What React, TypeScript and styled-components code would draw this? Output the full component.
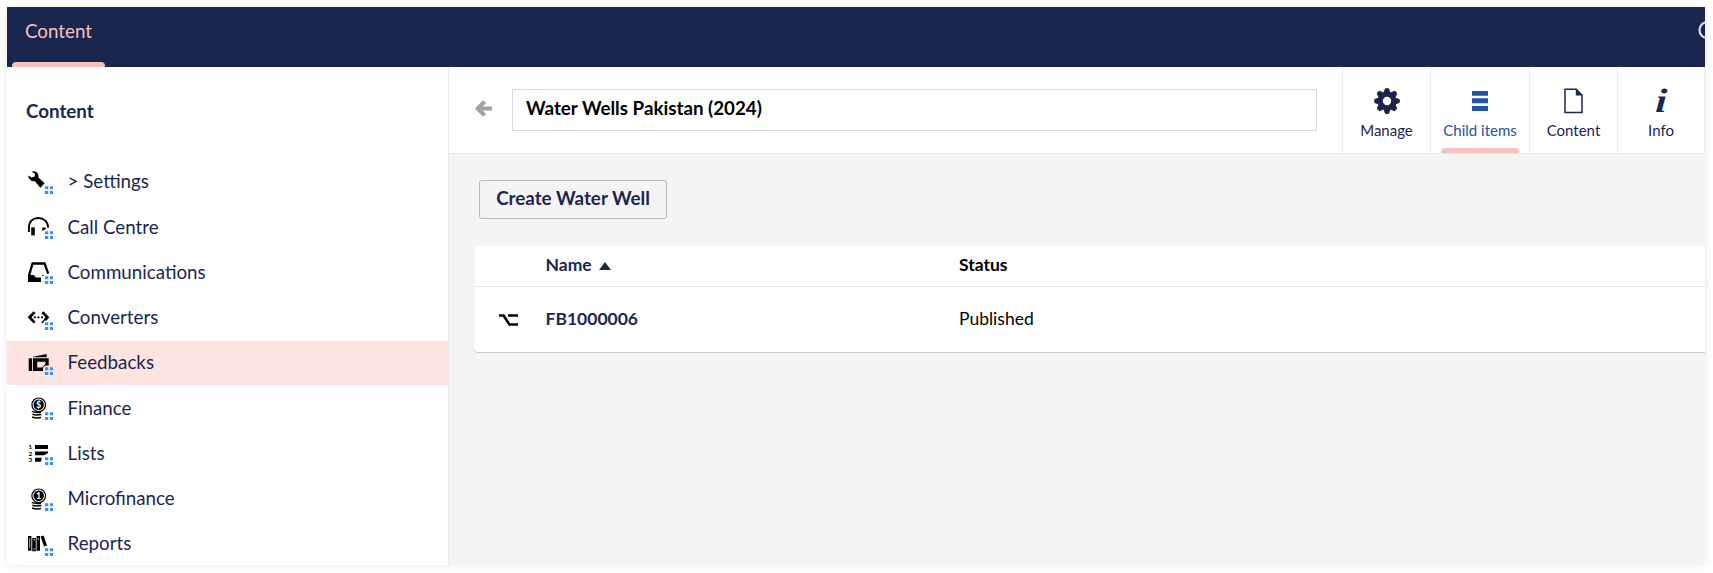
import React from 'react';
import styled, { createGlobalStyle, css } from 'styled-components';

const GlobalStyle = createGlobalStyle`
  *, *::before, *::after { box-sizing: border-box; }
  body { margin: 0; background: #fff; font-family: Lato, "Open Sans", sans-serif; }
`;

const Page = styled.div`
  height: 573px;
  padding: 7px 8px 8px 7px;
  overflow: hidden;
`;
const Frame = styled.div`
  width: 1698px;
  height: 558px;
  display: flex;
  flex-direction: column;
  background: #fff;
  box-shadow: 0 0 9px rgba(0, 0, 0, 0.09);
`;
const TopBar = styled.header`
  height: 60px;
  flex: none;
  display: flex;
  justify-content: space-between;
  padding-left: 5px;
  background: #1b264f;
  overflow: hidden;
`;
const Section = styled.div`
  width: 93px;
  display: flex;
  flex-direction: column;
  justify-content: space-between;
  color: #f5c1bc;
  font-size: 18.75px;
  line-height: 24px;
`;
const SectionLabel = styled.span`
  padding: 12px 0 0 13px;
`;
const Marker = styled.span<{ $width: number }>`
  width: ${(p) => p.$width}px;
  height: 5px;
  border-radius: 4px 4px 0 0;
  background: #f5c1bc;
`;
const Search = styled.svg`
  width: 7px;
  height: 20px;
  margin-top: 13px;
`;
const Body = styled.div`
  flex: 1;
  display: flex;
  min-height: 0;
`;
const Sidebar = styled.nav`
  width: 442px;
  flex: none;
  border-right: 1px solid #e9e9eb;
  overflow: hidden;
`;
const TreeTitle = styled.h2`
  margin: 0;
  height: 93px;
  padding: 32px 0 0 19px;
  color: #1b264f;
  font-size: 18.75px;
  font-weight: 700;
  line-height: 24px;
`;
const Row = styled.div<{ $active?: boolean }>`
  height: 44px;
  margin-bottom: 1.25px;
  padding: 0.3px 0 0 19px;
  display: flex;
  align-items: flex-start;
  color: #1b264f;
  font-size: 18.75px;
  line-height: 42px;
  ${(p) => p.$active && css`background: #fee4e1;`}
`;
const TreeIcon = styled.svg`
  width: 28px;
  height: 26px;
  margin: 7.7px 13.5px 0 0;
`;
const Main = styled.main`
  flex: 1;
  min-width: 0;
  background: #f5f3f4;
`;
const EditorHeader = styled.div`
  height: 87px;
  display: flex;
  align-items: stretch;
  background: #fff;
  border-bottom: 1px solid #e9e9eb;
`;
const Back = styled.svg`
  width: 17px;
  height: 17px;
  margin: 33px 20px 0 26px;
`;
const NameField = styled.input`
  width: 805px;
  height: 42px;
  margin: 22px 25px 0 0;
  padding: 0 13px 5px;
  border: 1px solid #d8d7d9;
  color: #000;
  font: 700 18.75px Lato, sans-serif;
`;
const Tab = styled.div<{ $width: number; $active?: boolean }>`
  width: ${(p) => p.$width}px;
  display: flex;
  flex-direction: column;
  align-items: center;
  justify-content: space-between;
  border-left: 1px solid #e9e9eb;
  color: ${(p) => (p.$active ? '#2152a3' : '#1b264f')};
  font-size: 15px;
  line-height: 20px;
  &:last-child { border-right: 1px solid #e9e9eb; }
`;
const TabInner = styled.div`
  display: flex;
  flex-direction: column;
  align-items: center;
  padding-top: 20px;
`;
const TabIcon = styled.svg`
  width: 28px;
  height: 28px;
  margin-bottom: 5px;
  overflow: visible;
`;
const Content = styled.div`
  padding: 26px 0 0 25px;
`;
const CreateButton = styled.button`
  display: block;
  width: 188px;
  height: 39px;
  margin: 0 0 27px 5px;
  padding: 0 0 5px;
  border: 1px solid #bbb9bc;
  border-radius: 3px;
  background: transparent;
  color: #1b264f;
  font: 700 18.75px Lato, sans-serif;
`;
const Table = styled.div`
  background: #fff;
  border-radius: 4px 0 0 4px;
  box-shadow: 0 1px 1px rgba(0, 0, 0, 0.18);
`;
const TableRow = styled.div<{ $head?: boolean }>`
  height: ${(p) => (p.$head ? 41 : 65)}px;
  padding-bottom: ${(p) => (p.$head ? 4 : 3)}px;
  display: grid;
  grid-template-columns: 71.5px 413.5px 1fr;
  align-items: center;
  font-size: 17.5px;
  border-bottom: ${(p) => (p.$head ? '1px solid #e9e9eb' : '0')};
`;
const Cell = styled.div<{ $bold?: boolean; $navy?: boolean }>`
  display: flex;
  align-items: center;
  gap: 7px;
  font-weight: ${(p) => (p.$bold ? 700 : 400)};
  color: ${(p) => (p.$navy ? '#1b264f' : '#000')};
`;
const SortArrow = styled.svg`
  width: 12px;
  height: 8px;
  margin-top: 4px;
`;
const TypeIcon = styled.svg`
  width: 19px;
  height: 12px;
  margin: 3px 0 0 25px;
`;

const coinStack = (
  <g fill="none" stroke="#000" strokeWidth="1.5">
    <path d="M5.8 17.4q3 1.6 9.3.8M6.4 20.2q3 1.2 9 .4M6 23q4 1.4 9 .6" />
  </g>
);

const coin = (symbol: string) => (
  <>
    <circle cx="12.7" cy="10.8" r="6.8" fill="none" stroke="#000" strokeWidth="1.2" />
    <circle cx="12.7" cy="10.8" r="5.2" />
    <text x="12.7" y="14" textAnchor="middle" fontSize="9" fontWeight="700" fill="#fff">{symbol}</text>
    {coinStack}
  </>
);

const tree: { label: string; active?: boolean; icon: React.ReactNode }[] = [
  {
    label: '> Settings',
    icon: (
      <>
        <path d="M7.6 3.2C10.8 3.2 13 6 12.4 9.4L18.6 15.2L14.4 19.8L8.8 13.2C5.6 13.4 2.4 11.4 2.2 7.4L5.8 9.4L8.6 8.6L9 5.8L5.6 3.8Z" />
      </>
    ),
  },
  {
    label: 'Call Centre',
    icon: (
      <>
        <path d="M2.9 19V14.6C3 8.4 7 5 12.4 5S22 8.8 22.2 14.6" fill="none" stroke="#000" strokeWidth="1.9" />
        <rect x="5.2" y="14.4" width="3.6" height="8" />
        <path d="M16.3 14.4H19.8V16L16.3 18Z" />
      </>
    ),
  },
  {
    label: 'Communications',
    icon: (
      <>
        <path d="M3 17.5L6.6 5.5H18.6L22.2 15.6" fill="none" stroke="#000" strokeWidth="2.3" />
        <path d="M2 17H7.8L9.8 19.4H15V23.9H2Z" />
        <path d="M16.4 17H18.6L16 18.6Z" />
      </>
    ),
  },
  {
    label: 'Converters',
    icon: (
      <>
        <path d="M8.6 8.2L3.6 13.3L8.6 18.6" fill="none" stroke="#000" strokeWidth="2.8" />
        <path d="M16.4 8.2L21.4 13.3L19 16" fill="none" stroke="#000" strokeWidth="2.8" />
        <path d="M19.4 15L15.6 19" stroke="#000" strokeWidth="1.2" />
        <circle cx="8.9" cy="13.3" r="1.1" />
        <circle cx="12.5" cy="13.3" r="1.1" />
        <circle cx="16" cy="13.3" r="1.1" />
      </>
    ),
  },
  {
    label: 'Feedbacks',
    active: true,
    icon: (
      <>
        <rect x="2.7" y="9.3" width="3.4" height="12.7" />
        <path d="M7 7.8L20.7 5V8.2H7Z" />
        <path fillRule="evenodd" d="M7 9.3H22.7V16.6H19.2L17 18.4V22H7ZM11.2 12.8V18.4H16L19.4 15V12.8Z" />
      </>
    ),
  },
  { label: 'Finance', icon: coin('$') },
  {
    label: 'Lists',
    icon: (
      <>
        <path d="M9 6H22V10H9ZM9 12.4H22V14L18 16.2H9ZM9 18.8H15.8L15 22.8H9Z" />
        <g fontSize="6.4" fontWeight="700">
          <text x="2.6" y="10.4">1</text>
          <text x="2.6" y="16.8">2</text>
          <text x="2.6" y="23.2">3</text>
        </g>
      </>
    ),
  },
  { label: 'Microfinance', icon: coin('1') },
  {
    label: 'Reports',
    icon: (
      <>
        <path d="M2 6H5.4V20.8H2ZM6.2 8H9.8V21.2H6.2ZM10.6 6H14V20.8H10.6ZM14.6 6.4L17.6 5.4L21 15.4L18 16.6Z" />
        <path d="M3.7 8V18M7.2 9.8H9M7.2 19H9M12.3 8V10" stroke="#fff" strokeWidth=".7" />
      </>
    ),
  },
];

const gearTeeth = [0, 45, 90, 135, 180, 225, 270, 315];

export default function App() {
  return (
    <Page>
      <GlobalStyle />
      <Frame>
        <TopBar>
          <Section>
            <SectionLabel>Content</SectionLabel>
            <Marker $width={93} />
          </Section>
          <Search viewBox="0 0 7 20">
            <circle cx="9.6" cy="10" r="8.1" fill="none" stroke="#dddee6" strokeWidth="2.2" />
          </Search>
        </TopBar>
        <Body>
          <Sidebar>
            <TreeTitle>Content</TreeTitle>
            {tree.map((item) => (
              <Row key={item.label} $active={item.active}>
                <TreeIcon viewBox="0 0 28 26">
                  {item.icon}
                  <path d="M19 18.2H22.3V21.3H19ZM23.9 18.2H27V21.3H23.9ZM19 22.9H22.3V26H19ZM23.9 22.9H27V26H23.9Z" fill="#3a8ff2" />
                </TreeIcon>
                {item.label}
              </Row>
            ))}
          </Sidebar>
          <Main>
            <EditorHeader>
              <Back viewBox="0 0 17 17">
                <path d="M9.6 1.6L2.8 8.5L9.6 15.4M3 8.5H17" fill="none" stroke="#a2a1a6" strokeWidth="4.2" />
              </Back>
              <NameField defaultValue="Water Wells Pakistan (2024)" />
              <Tab $width={88}>
                <TabInner>
                  <TabIcon viewBox="-14 -14 28 28" fill="#1b264f">
                    {gearTeeth.map((a) => (
                      <path key={a} d="M-3.6 -8L-2 -12.4Q0 -13.6 2 -12.4L3.6 -8Z" transform={`rotate(${a})`} />
                    ))}
                    <circle r="6.7" fill="none" stroke="#1b264f" strokeWidth="5" />
                  </TabIcon>
                  Manage
                </TabInner>
              </Tab>
              <Tab $width={99} $active>
                <TabInner>
                  <TabIcon viewBox="0 0 28 28">
                    <path d="M6 4H22V8.8H6ZM6 11.3H22V16.3H6ZM6 19H22V24H6Z" fill="#2152a3" />
                  </TabIcon>
                  Child items
                </TabInner>
                <Marker $width={78} />
              </Tab>
              <Tab $width={88}>
                <TabInner>
                  <TabIcon viewBox="0 0 28 28">
                    <path d="M6 2.2H17.2L23 8V25.6H6Z" fill="none" stroke="#1b264f" strokeWidth="1.5" />
                    <path d="M16.8 1.6L23.6 8.4H16.8Z" fill="#1b264f" />
                  </TabIcon>
                  Content
                </TabInner>
              </Tab>
              <Tab $width={88}>
                <TabInner>
                  <TabIcon viewBox="0 0 28 28">
                    <text transform="translate(13.6 25.4) skewX(-3) scale(1.2 1)" textAnchor="middle" fontFamily="Liberation Serif, serif" fontStyle="italic" fontWeight="700" fontSize="34" fill="#1b264f">i</text>
                  </TabIcon>
                  Info
                </TabInner>
              </Tab>
            </EditorHeader>
            <Content>
              <CreateButton>Create Water Well</CreateButton>
              <Table>
                <TableRow $head>
                  <span />
                  <Cell $bold $navy>
                    Name
                    <SortArrow viewBox="0 0 12 8"><path d="M0 8L6 0L12 8Z" fill="#1b264f" /></SortArrow>
                  </Cell>
                  <Cell $bold>Status</Cell>
                </TableRow>
                <TableRow>
                  <TypeIcon viewBox="0 0 19 12">
                    <path d="M0 1.5H4.6L10.4 10.5H19M9 1.5H19" fill="none" stroke="#000" strokeWidth="2.6" />
                  </TypeIcon>
                  <Cell $bold $navy>FB1000006</Cell>
                  <Cell>Published</Cell>
                </TableRow>
              </Table>
            </Content>
          </Main>
        </Body>
      </Frame>
    </Page>
  );
}
